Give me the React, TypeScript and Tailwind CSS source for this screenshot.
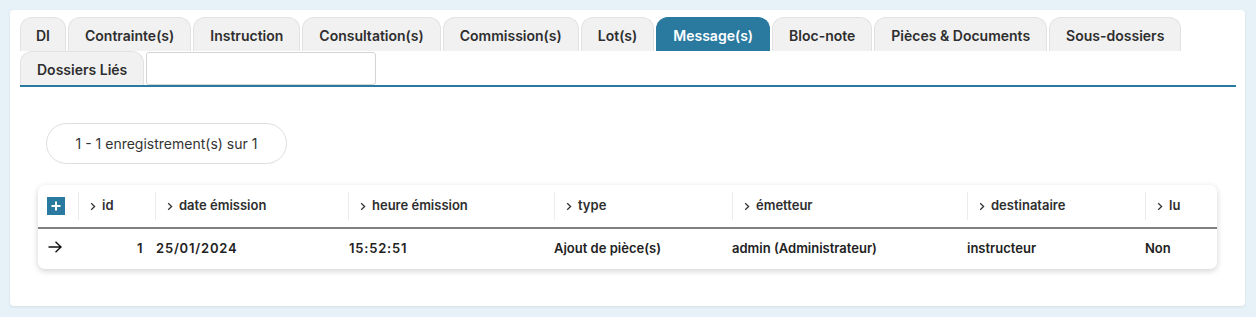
import React from "react";

const tabs = [
  "DI",
  "Contrainte(s)",
  "Instruction",
  "Consultation(s)",
  "Commission(s)",
  "Lot(s)",
  "Message(s)",
  "Bloc-note",
  "Pièces & Documents",
  "Sous-dossiers",
  "Dossiers Liés",
];

const columns = [
  { label: "id", width: "w-[77px]" },
  { label: "date émission", width: "w-[193px]" },
  { label: "heure émission", width: "w-[206px]" },
  { label: "type", width: "w-[178px]" },
  { label: "émetteur", width: "w-[235px]" },
  { label: "destinataire", width: "w-[178px]" },
  { label: "lu", width: "w-[72px]" },
];

const Chevron = () => (
  <svg width="6" height="9" viewBox="0 0 6 9" className="mr-[6px] shrink-0">
    <path d="M1.2 1.2 L4.6 4.5 L1.2 7.8" fill="none" stroke="#333" strokeWidth="1.3" />
  </svg>
);

const App: React.FC = () => {
  return (
    <div className="min-h-[317px] bg-[#e6f2f8] p-[10px] font-['Inter',sans-serif] text-[#2e2e2e]">
      <div className="w-[1235px] h-[296px] rounded-[4px] bg-white shadow-[0_1px_3px_rgba(0,0,0,0.08)] pt-[7px] px-[10px]">
        {/* onglets */}
        <div className="flex flex-wrap gap-x-[2px] w-[1216px] border-b-2 border-[#2a7aa0]">
          {tabs.map((t) => {
            const active = t === "Message(s)";
            const pad = t === "DI" ? "px-[15px]" : "px-4";
            return (
              <div
                key={t}
                className={
                  active
                    ? `h-[34px] pt-[2px] ${pad} flex items-center rounded-t-[12px] bg-[#2a7aa0] border border-[#2a7aa0] border-b-0 text-white text-[14px] font-semibold`
                    : `h-[34px] pt-[2px] ${pad} flex items-center rounded-t-[12px] bg-[#f1f1f1] border border-[#e2e2e2] border-b-0 text-[#2e2e2e] text-[14px] font-semibold`
                }
              >
                {t}
              </div>
            );
          })}
          <div className="h-[34px] flex items-center">
            <div className="w-[230px] h-[33px] border border-[#d4d4d4] rounded-[3px] bg-white" />
          </div>
        </div>

        {/* pagination */}
        <div className="mt-[36px] ml-[26px] w-[241px] h-[41px] rounded-full border border-[#dedede] flex items-center justify-center text-[14px] text-[#333]">
          1 - 1 enregistrement(s) sur 1
        </div>

        {/* tableau */}
        <div className="mt-[21px] ml-[18px] w-[1179px] rounded-[7px] bg-white shadow-[0_2px_6px_rgba(0,0,0,0.18)]">
          <div className="flex h-[44px] items-center border-b-2 border-[#808080]">
            <div className="w-[40px] h-full flex items-center pl-[9px]">
              <div className="w-[18px] h-[18px] bg-[#2a7aa0] flex items-center justify-center">
                <svg width="12" height="12" viewBox="0 0 12 12">
                  <path d="M6 1.5 V10.5 M1.5 6 H10.5" stroke="white" strokeWidth="2" />
                </svg>
              </div>
            </div>
            {columns.map((c) => (
              <div key={c.label} className={`${c.width} h-[28px] flex items-center border-l border-[#ececec] pl-[11px] text-[13px] font-semibold`}>
                <Chevron />
                {c.label}
              </div>
            ))}
          </div>
          <div className="flex h-[40px] items-center text-[13px] font-semibold text-[#222]">
            <div className="w-[40px] pl-[10px] -mt-[5px]">
              <svg width="14" height="12" viewBox="0 0 14 12">
                <path d="M0.5 6 H13 M7.5 0.8 L13 6 L7.5 11.2" fill="none" stroke="#111" strokeWidth="1.4" />
              </svg>
            </div>
            <div className="w-[77px] text-right pr-[12px] tracking-[0.5px]">1</div>
            <div className="w-[193px] pl-[1px] tracking-[0.8px]">25/01/2024</div>
            <div className="w-[206px] pl-[1px] tracking-[0.8px]">15:52:51</div>
            <div className="w-[178px]">Ajout de pièce(s)</div>
            <div className="w-[235px]">admin (Administrateur)</div>
            <div className="w-[178px]">instructeur</div>
            <div className="w-[72px]">Non</div>
          </div>
        </div>
      </div>
    </div>
  );
};

export default App;
